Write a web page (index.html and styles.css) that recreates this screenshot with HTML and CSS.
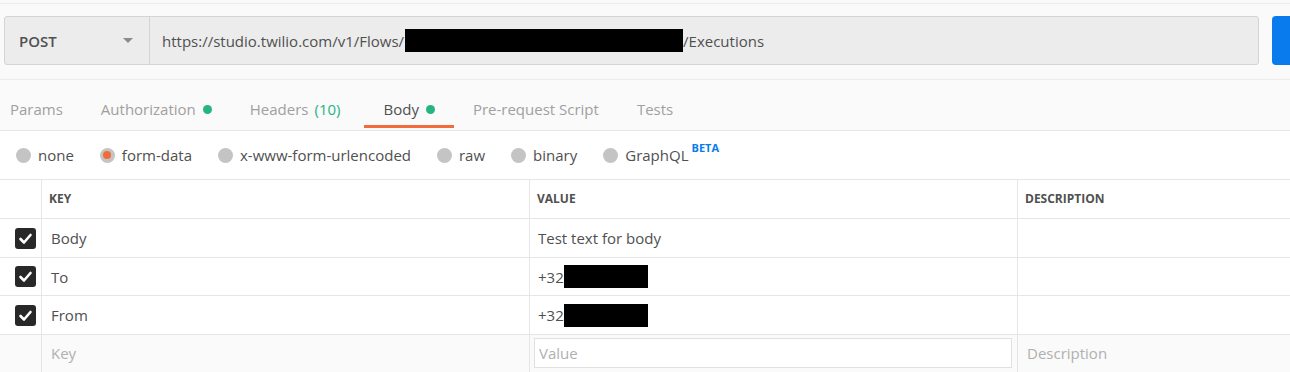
FILE: index.html
```html
<!DOCTYPE html>
<html lang="en">
<head>
<meta charset="UTF-8">
<meta name="viewport" content="width=device-width, initial-scale=1.0">
<title>Request Builder</title>
<link rel="stylesheet" href="styles.css">
</head>
<body>
    <div class="request">
        <div class="request-bar">
            <div class="url-group">
                <div class="method">POST <span class="caret"></span></div>
                <div class="url">https://studio.twilio.com/v1/Flows/<span class="redact redact-url"></span>/Executions</div>
            </div>
            <div class="send"></div>
        </div>
    </div>

    <div class="tabs">
        <div class="tab">Params</div>
        <div class="tab">Authorization <span class="dot"></span></div>
        <div class="tab headers">Headers <span class="count">(10)</span></div>
        <div class="tab active">Body <span class="dot"></span></div>
        <div class="tab">Pre-request Script</div>
        <div class="tab">Tests</div>
    </div>

    <div class="body-modes">
        <label class="mode"><span class="radio"></span>none</label>
        <label class="mode"><span class="radio checked"></span>form-data</label>
        <label class="mode"><span class="radio"></span>x-www-form-urlencoded</label>
        <label class="mode"><span class="radio"></span>raw</label>
        <label class="mode"><span class="radio"></span>binary</label>
        <label class="mode"><span class="radio"></span>GraphQL <sup class="beta">BETA</sup></label>
    </div>

    <div class="kv-table">
        <div class="cell head"></div>
        <div class="cell head">KEY</div>
        <div class="cell head">VALUE</div>
        <div class="cell head">DESCRIPTION</div>

        <div class="cell check"><span class="checkbox"><svg width="21" height="21" viewBox="0 0 21 21"><polyline points="5.5,11 9,14.5 15.5,7" fill="none" stroke="#fff" stroke-width="2.6" stroke-linecap="round" stroke-linejoin="round"/></svg></span></div>
        <div class="cell key">Body</div>
        <div class="cell value">Test text for body</div>
        <div class="cell desc"></div>

        <div class="cell check"><span class="checkbox"><svg width="21" height="21" viewBox="0 0 21 21"><polyline points="5.5,11 9,14.5 15.5,7" fill="none" stroke="#fff" stroke-width="2.6" stroke-linecap="round" stroke-linejoin="round"/></svg></span></div>
        <div class="cell key">To</div>
        <div class="cell value">+32<span class="redact redact-phone"></span></div>
        <div class="cell desc"></div>

        <div class="cell check"><span class="checkbox"><svg width="21" height="21" viewBox="0 0 21 21"><polyline points="5.5,11 9,14.5 15.5,7" fill="none" stroke="#fff" stroke-width="2.6" stroke-linecap="round" stroke-linejoin="round"/></svg></span></div>
        <div class="cell key">From</div>
        <div class="cell value">+32<span class="redact redact-phone"></span></div>
        <div class="cell desc"></div>

        <div class="cell check new"></div>
        <div class="cell key new placeholder">Key</div>
        <div class="cell value new"><div class="value-input placeholder">Value</div></div>
        <div class="cell desc new placeholder">Description</div>
    </div>
</body>
</html>
```

FILE: styles.css
```css
/* Request builder, Postman style */
html, body {
    margin: 0;
    overflow: hidden;
}
body {
    font-family: "Open Sans", "Liberation Sans", sans-serif;
    font-size: 15px;
    color: #505050;
    background: #fff;
}

.request {
    background: #fafafa;
    padding: 3px 0 0 4px;
}
.request-bar {
    display: flex;
    border-top: 1px solid #ececec;
    border-bottom: 1px solid #ececec;
    margin-left: -4px;
    padding: 12px 0 14px 4px;
}
.url-group {
    display: flex;
    width: 1255px;
    height: 49px;
    box-sizing: border-box;
    background: #ececec;
    border: 1px solid #d4d4d4;
    border-radius: 3px;
}
.method {
    display: flex;
    align-items: center;
    width: 145px;
    box-sizing: border-box;
    padding-left: 14px;
    border-right: 1px solid #d4d4d4;
    font-weight: 600;
}
.caret {
    margin-left: auto;
    margin-right: 16px;
    width: 0;
    height: 0;
    border-left: 5px solid transparent;
    border-right: 5px solid transparent;
    border-top: 5px solid #8a8a8a;
}
.url {
    display: flex;
    align-items: center;
    padding-left: 12px;
}
.redact {
    display: inline-block;
    background: #000;
}
.redact-url {
    width: 278px;
    height: 23px;
    margin-left: 1px;
}
.send {
    margin-left: 13px;
    flex: 1;
    height: 49px;
    background: #097bed;
    border-radius: 4px 0 0 4px;
}

.tabs {
    display: flex;
    height: 50px;
    background: #fafafa;
    border-bottom: 1px solid #e6e6e6;
}
.tab {
    display: flex;
    align-items: center;
    padding: 19px 19px 6px;
    height: 20px;
    border-bottom: 3px solid transparent;
    color: #a0a0a0;
}
.tab:first-child {
    padding-left: 10px;
}
.tab.headers {
    padding-right: 24px;
}
.tab.active {
    color: #505050;
    border-bottom-color: #f26b3a;
}
.dot {
    display: inline-block;
    width: 9px;
    height: 9px;
    margin-left: 7px;
    border-radius: 50%;
    background: #26b47f;
}
.count {
    color: #26b47f;
    margin-left: 6px;
}

.body-modes {
    display: flex;
    align-items: center;
    gap: 26px;
    height: 48px;
    padding-left: 16px;
}
.mode {
    display: flex;
    align-items: center;
}
.radio {
    width: 15px;
    height: 15px;
    margin-right: 7px;
    border-radius: 50%;
    background: #c4c4c4;
    display: flex;
    align-items: center;
    justify-content: center;
}
.radio.checked::after {
    content: "";
    width: 8px;
    height: 8px;
    border-radius: 50%;
    background: #f26b3a;
}
.beta {
    align-self: flex-start;
    margin-left: 3px;
    margin-top: -5px;
    font-size: 11px;
    font-weight: 700;
    color: #097bed;
}

.kv-table {
    display: grid;
    grid-template-columns: 42px 488px 488px 1fr;
    grid-template-rows: 39px 39px 38px 39px 39px;
    border-top: 1px solid #e6e6e6;
}
.cell {
    display: flex;
    align-items: center;
    border-right: 1px solid #e6e6e6;
    border-bottom: 1px solid #e6e6e6;
    padding-left: 9px;
    white-space: nowrap;
}
.cell:nth-child(4n) {
    border-right: none;
}
.head {
    padding-left: 7px;
    padding-bottom: 1px;
    font-size: 12px;
    font-weight: 700;
    color: #505050;
}
.value {
    padding-left: 8px;
}
.check {
    padding-left: 15px;
}
.checkbox {
    display: flex;
    width: 21px;
    height: 21px;
    border-radius: 3px;
    background: #282828;
}
.redact-phone {
    width: 84px;
    height: 23px;
}
.new {
    background: #fafafa;
    padding-bottom: 3px;
}
.placeholder {
    color: #b0b0b0;
}
.cell.value.new {
    padding: 0 5px 3px 4px;
}
.value-input {
    flex: 1;
    height: 30px;
    box-sizing: border-box;
    display: flex;
    align-items: center;
    padding-left: 4px;
    background: #fff;
    border: 1px solid #e0e0e0;
}
```
